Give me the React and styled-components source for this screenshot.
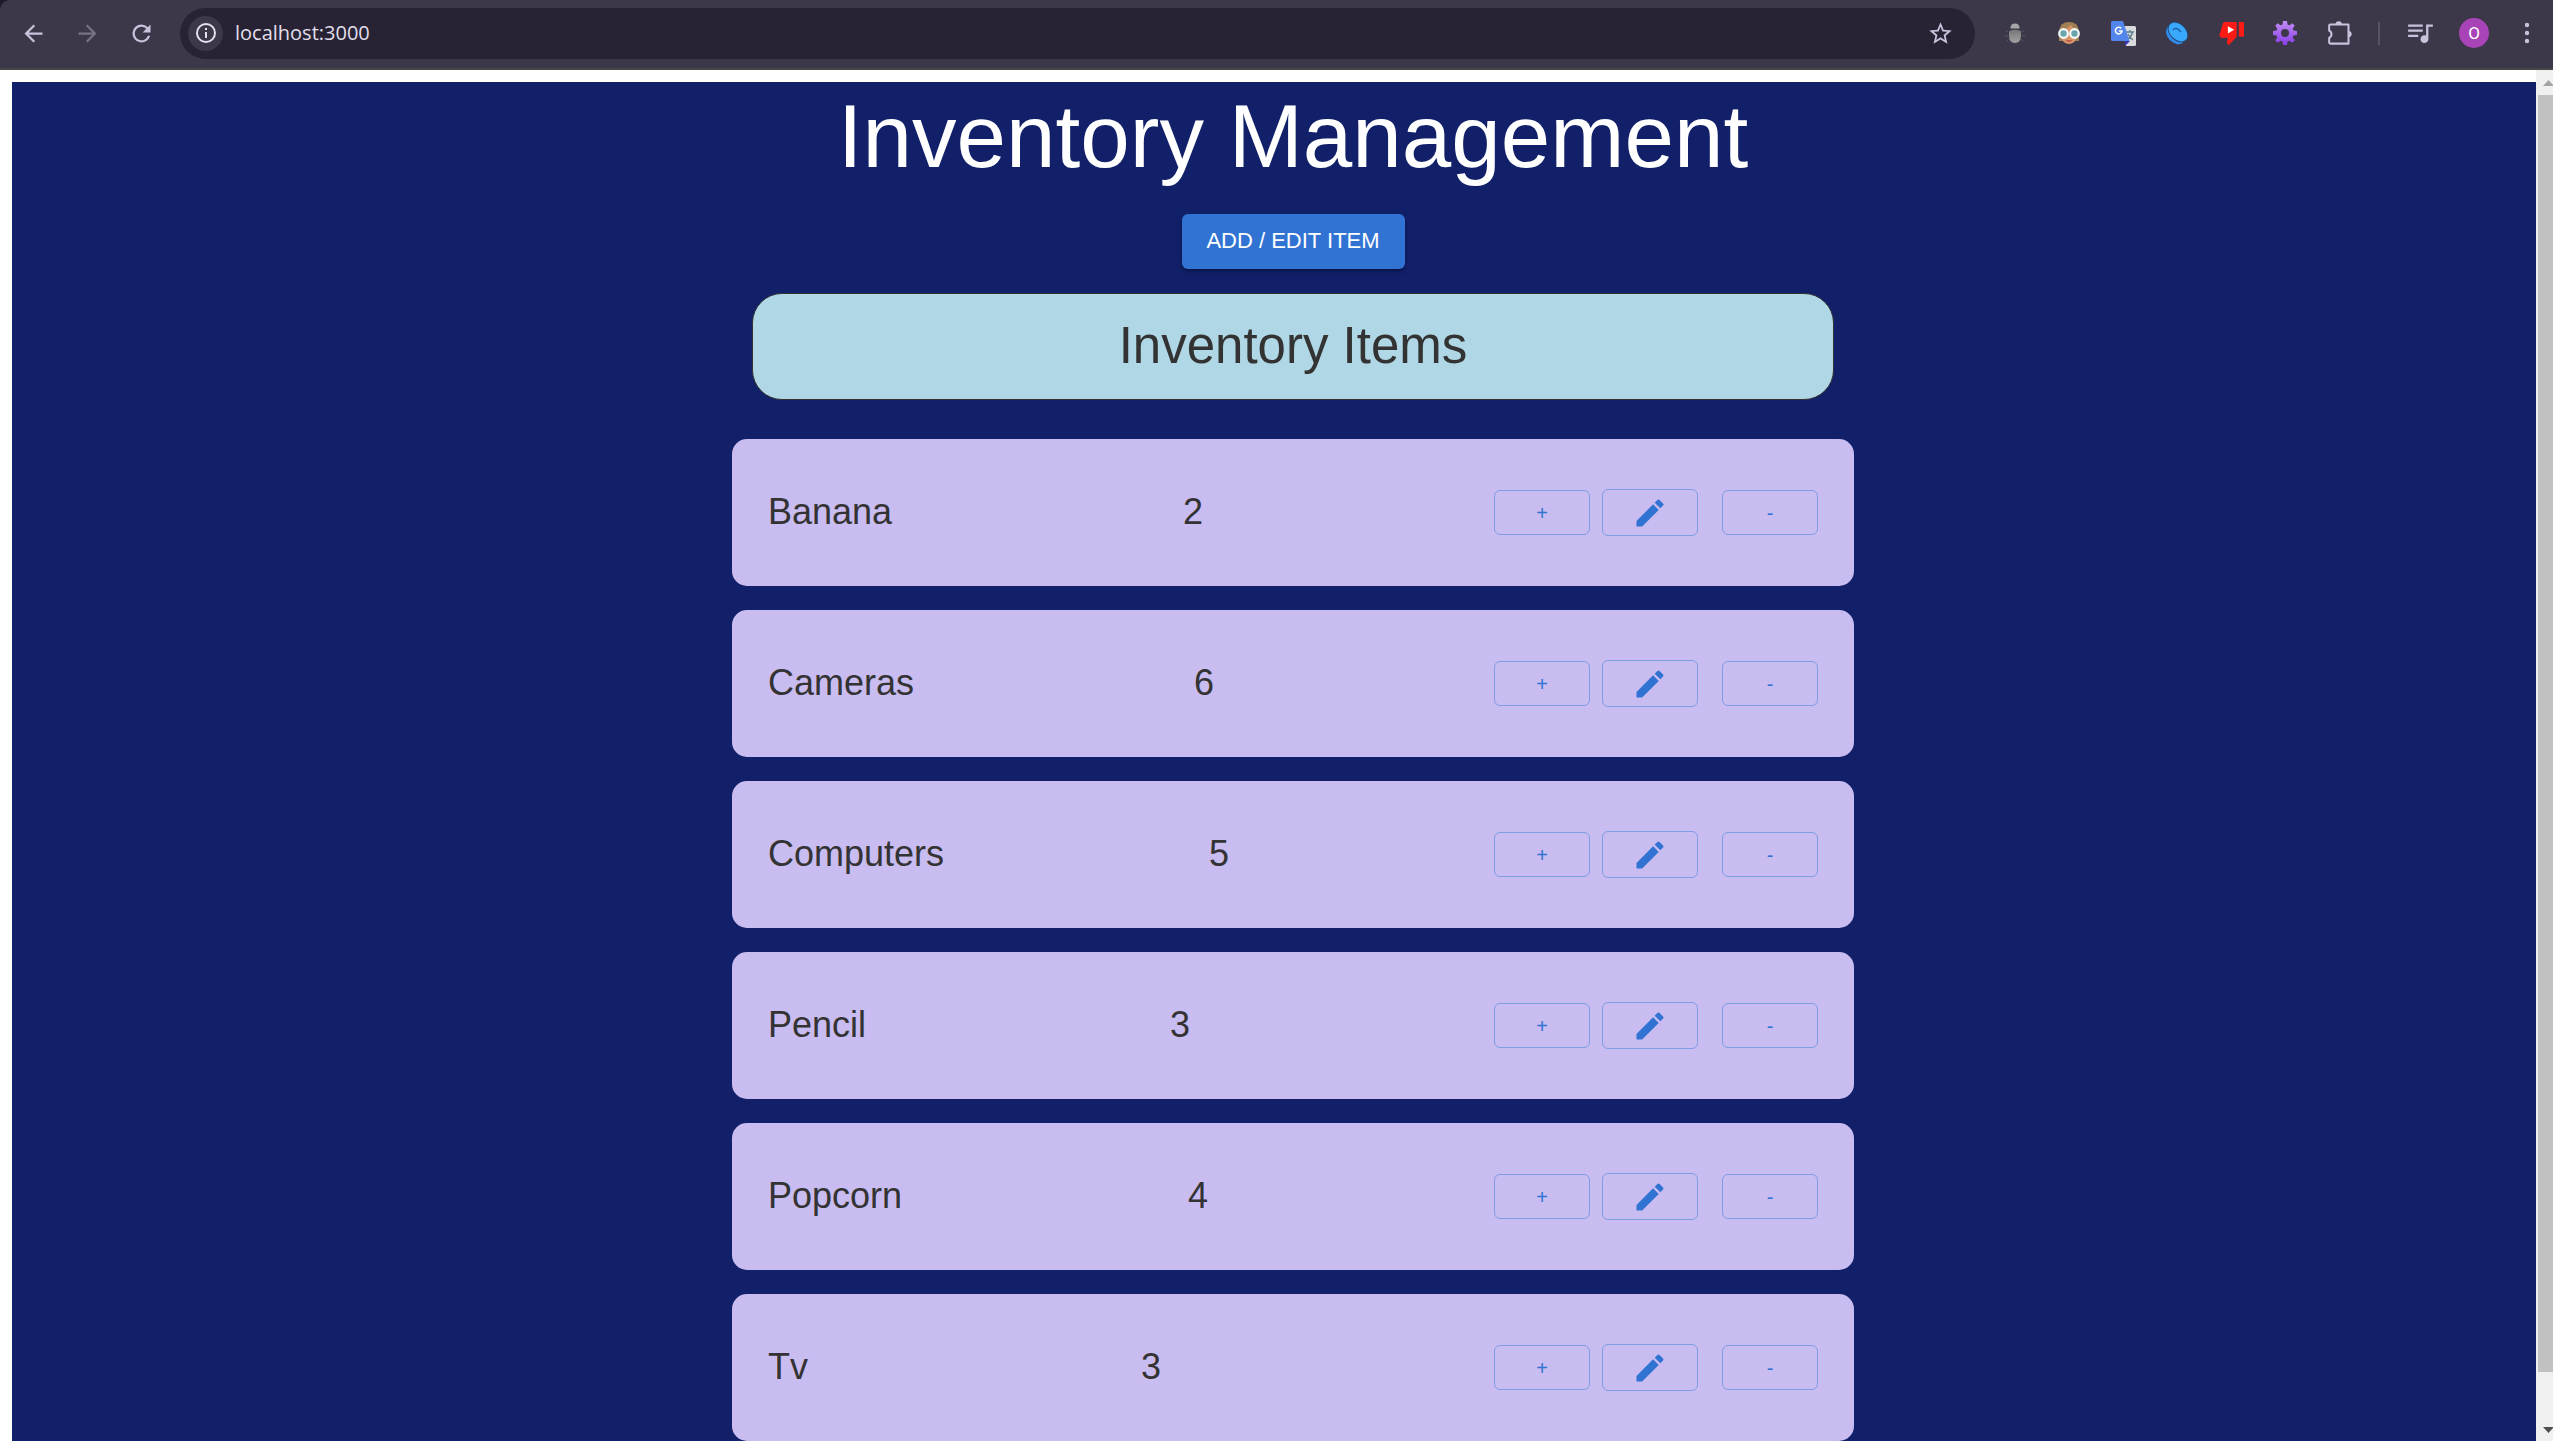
import React from 'react';
import styled, { createGlobalStyle } from 'styled-components';

const Global = createGlobalStyle`
  *, *::before, *::after { box-sizing: border-box; }
  body { margin: 0; background: #fff; font-family: "Liberation Sans", Arial, sans-serif; }
`;

const Window = styled.div`
  display: flex;
  flex-direction: column;
  height: 100vh;
  overflow: hidden;
  background: #1f1b2c;
`;

const Toolbar = styled.header`
  display: flex;
  align-items: center;
  flex: none;
  height: 70px;
  padding: 0 0 2px 17px;
  background: #3c384a;
  border-bottom: 2px solid #474649;
  border-top-left-radius: 10px;
`;

const ToolButton = styled.button`
  display: flex;
  align-items: center;
  justify-content: center;
  flex: none;
  width: ${(p) => p.$width || 54}px;
  height: 40px;
  padding: 0;
  border: 0;
  background: none;
  color: ${(p) => (p.$muted ? '#777286' : '#c9c2dc')};
  svg { display: block; flex: none; }
`;

const NavGroup = styled.nav`
  display: flex;
  flex: none;
  margin-left: -11px;
`;

const AddressBar = styled.div`
  display: flex;
  align-items: center;
  flex: 1;
  height: 51px;
  margin: 0 13px 0 12px;
  padding: 0 8px;
  border-radius: 26px;
  background: #272335;
`;

const SiteInfo = styled.button`
  display: flex;
  align-items: center;
  justify-content: center;
  width: 35px;
  height: 35px;
  padding: 0;
  border: 0;
  border-radius: 50%;
  background: #3c384a;
  color: #e4e0ee;
`;

const Address = styled.input`
  flex: 1;
  min-width: 0;
  padding: 0;
  margin-left: 12px;
  border: 0;
  outline: 0;
  background: none;
  color: #e2dfea;
  font: 20px/28px "Open Sans", "Noto Sans", sans-serif;
`;

const Divider = styled.span`
  width: 2px;
  height: 23px;
  margin: 0 13px 0 12px;
  background: #57536a;
`;

const Avatar = styled.span`
  display: flex;
  align-items: center;
  justify-content: center;
  width: 30px;
  height: 30px;
  border-radius: 50%;
  background: #a943b8;
  color: #fff;
  font: 17px/30px Roboto, sans-serif;
`;

const Viewport = styled.div`
  display: flex;
  flex: 1;
  min-height: 0;
  background: #fff;
`;

const Document = styled.main`
  flex: 1;
  min-width: 0;
  overflow: hidden;
  padding: 12px 0 0 12px;
`;

const Page = styled.div`
  display: flex;
  flex-direction: column;
  align-items: center;
  min-height: 100%;
  padding-left: 38px;
  background: #112069;
`;

const Title = styled.h1`
  margin: 0;
  color: #fff;
  font-size: 89px;
  font-weight: 400;
  line-height: 108px;
`;

const AddButton = styled.button`
  width: 223px;
  height: 55px;
  margin: 24px 0;
  padding: 0 0 2px;
  border: 0;
  border-radius: 6px;
  background: #3173d3;
  box-shadow: 0 4px 2px -3px rgba(0, 0, 0, 0.2), 0 3px 3px rgba(0, 0, 0, 0.14), 0 2px 8px rgba(0, 0, 0, 0.12);
  color: #fff;
  font: 22px/37px "Liberation Sans", Arial, sans-serif;
  text-transform: uppercase;
`;

const ListTitle = styled.h2`
  width: 1082px;
  margin: 0 0 39px;
  padding: 20px 0 22px;
  border: 1px solid #333;
  border-radius: 30px;
  background: #b0d7e5;
  color: #333;
  font-size: 51px;
  font-weight: 400;
  line-height: 63px;
  text-align: center;
`;

const List = styled.ul`
  display: flex;
  flex-direction: column;
  gap: 24px;
  width: 1122px;
  margin: 0;
  padding: 0;
  list-style: none;
`;

const Card = styled.li`
  display: flex;
  align-items: center;
  justify-content: space-between;
  height: 147px;
  padding: 0 36px;
  border-radius: 15px;
  background: #c9bcf0;
  color: #333;
`;

const CardText = styled.span`
  padding-bottom: 2px;
  font-size: 36px;
  line-height: 48px;
`;

const Actions = styled.div`
  display: flex;
  align-items: center;
  gap: 12px;
`;

const ActionButton = styled.button`
  display: flex;
  align-items: center;
  justify-content: center;
  width: 96px;
  height: ${(p) => (p.$tall ? 47 : 45)}px;
  margin-right: ${(p) => (p.$tall ? 12 : 0)}px;
  padding: 0;
  border: 1px solid #7f9de4;
  border-radius: 6px;
  background: none;
  color: #3173d3;
  font: 20px/34px "Liberation Sans", Arial, sans-serif;
`;

const Scrollbar = styled.div`
  display: flex;
  flex-direction: column;
  flex: none;
  width: 17px;
  padding-left: 2px;
  overflow: hidden;
  background: #f0f0f0;
  svg { display: block; flex: none; }
`;

const Thumb = styled.div`
  flex: 1;
  margin-bottom: 44px;
  background: #c1c1c1;
`;

const Icon = ({ size = 24, box = 24, children, ...rest }) => (
  <svg width={size} height={size} viewBox={`0 0 ${box} ${box}`} fill="currentColor" aria-hidden="true" {...rest}>
    {children}
  </svg>
);

const BackIcon = () => (
  <Icon size={27}><path d="M20 11H7.8l5.6-5.6L12 4l-8 8 8 8 1.4-1.4L7.8 13H20z" /></Icon>
);
const ForwardIcon = () => (
  <Icon size={27}><path d="M4 11h12.200l-5.600-5.600L12 4l8 8-8 8-1.400-1.400 5.600-5.600H4z" /></Icon>
);
const ReloadIcon = () => (
  <Icon size={27}><path d="M17.650 6.350A7.960 7.960 0 0 0 12 4a8 8 0 1 0 7.730 10h-2.080A6 6 0 1 1 12 6c1.660 0 3.140.690 4.220 1.780L13 11h7V4z" /></Icon>
);
const InfoIcon = () => (
  <Icon size={24}><path d="M11 7h2v2h-2zm0 4h2v6h-2zm1-9a10 10 0 1 0 0 20 10 10 0 0 0 0-20zm0 18a8 8 0 1 1 0-16 8 8 0 0 1 0 16z" /></Icon>
);
const StarIcon = () => (
  <Icon size={27}><path d="M22 9.240l-7.190-.620L12 2 9.190 8.630 2 9.240l5.460 4.730L5.820 21 12 17.270 18.180 21l-1.630-7.030zM12 15.400l-3.760 2.270 1-4.280-3.320-2.880 4.380-.380L12 6.100l1.710 4.040 4.380.380-3.320 2.880 1 4.280z" /></Icon>
);
const BugIcon = () => (
  <Icon size={22}>
    <defs>
      <linearGradient id="bug" x1="0" y1="0" x2="0" y2="1">
        <stop offset="0" stopColor="#777" /><stop offset="1" stopColor="#a2a2a2" />
      </linearGradient>
    </defs>
    <path d="M7 7q0-5.500 5-5.500T17 7z" fill="#a6a6a6" />
    <path d="M5.500 10q6.500-3 13 0v5q0 8-6.500 8t-6.500-8z" fill="url(#bug)" />
    <path d="M2 10h2M1 15h3M3 21l2-2M22 10h-2M23 15h-3M21 21l-2-2" stroke="#5f5d66" fill="none" />
  </Icon>
);
const FaceIcon = () => (
  <Icon size={24}>
    <path d="M2 20V10Q3 1 12 1t10 9v10z" fill="#a07f52" />
    <path d="M4 10Q10 8 14 4q2 4 6 5v7q-2 7-8 7t-8-7z" fill="#d59468" />
    <circle cx="6.500" cy="12.500" r="4.300" fill="#6ba6ac" stroke="#f4f8f8" strokeWidth="2.200" />
    <circle cx="17.500" cy="12.500" r="4.300" fill="#6ba6ac" stroke="#f4f8f8" strokeWidth="2.200" />
    <path d="M9.500 19.500q2.500 1 5 0" stroke="#bc4b42" fill="none" strokeWidth="1.300" />
  </Icon>
);
const TranslateIcon = () => (
  <Icon size={25} box={25}>
    <path d="M10 5h13.500q1.500 0 1.500 1.500v17q0 1.500-1.500 1.500H15z" fill="#d9dadd" />
    <path d="M15 11h8M19 9v2M21.500 11q-1 5-6 8M17 13q2 4 5 6" stroke="#5c7f8c" strokeWidth="1.400" fill="none" />
    <path d="M14 20h5l-5 5z" fill="#3a35b0" />
    <path d="M1.500 0H12l6.500 20h-17Q0 20 0 18.500v-17Q0 0 1.500 0z" fill="#5286ec" />
    <path d="M10.200 7.400A3.300 3.300 0 1 0 11 10H7.800" stroke="#fff" strokeWidth="1.600" fill="none" />
  </Icon>
);
const ShellIcon = () => (
  <Icon size={24}>
    <ellipse cx="10.500" cy="13.500" rx="8" ry="11" transform="rotate(-42 10.500 13.500)" fill="#2f8df0" />
    <ellipse cx="13" cy="11" rx="8" ry="11.500" transform="rotate(-45 13 11)" fill="#39a9fb" stroke="#26436f" strokeWidth="1" />
    <path d="M8 9q3-4 8 2" stroke="#1d5fa8" strokeWidth="1.500" fill="none" />
  </Icon>
);
const DislikeIcon = () => (
  <Icon size={25}>
    <path d="M5.500 1H17v14l-7.500 8q-3-1-1-7H2q-2-1-1.500-3l3-10Q4 1 5.500 1z" fill="#fd1c15" />
    <path d="M19 1h5v14h-5z" fill="#fd1c15" />
    <path d="M8.500 5v7l6-3.500z" fill="#fff" />
  </Icon>
);
const GearIcon = () => (
  <Icon size={24}>
    <defs>
      <linearGradient id="gear" x1="0" y1="0" x2="0" y2="1">
        <stop offset="0" stopColor="#c08cf5" /><stop offset="1" stopColor="#8a3ee8" />
      </linearGradient>
    </defs>
    <path fill="url(#gear)" fillRule="evenodd" d="M10 0h4l.500 3.500 2 .8L19.300 2.200 21.800 4.700 19.700 7.500l.8 2L24 10v4l-3.500.500-.8 2 2.100 2.800-2.500 2.500-2.800-2.100-2 .8L14 24h-4l-.500-3.500-2-.8-2.800 2.100-2.500-2.500 2.100-2.800-.8-2L0 14v-4l3.500-.500.8-2L2.200 4.700 4.700 2.200 7.500 4.300l2-.8zM12 8a4 4 0 1 0 0 8 4 4 0 0 0 0-8z" />
  </Icon>
);
const PuzzleIcon = () => (
  <Icon size={27}>
    <path d="M4 4H20V21H4Q2.800 21 2.800 19.800V16A3.600 3.600 0 0 0 2.800 9.500V5.200Q2.800 4 4 4z" fill="none" stroke="currentColor" strokeWidth="1.800" strokeLinejoin="round" />
    <path d="M8.500 4a2.800 2.800 0 0 1 5.600 0zM20 9.700a2.800 2.800 0 0 1 0 5.600z" />
  </Icon>
);
const QueueIcon = () => (
  <Icon size={27}>
    <path d="M1 4h13v2H1zM1 8.500h13v2H1zM1 13h9v2H1zM16 4h7v2h-4v11a3.500 3.500 0 1 1-2-3.200V4z" />
  </Icon>
);
const MoreIcon = () => (
  <Icon size={24}>
    <circle cx="12" cy="4" r="2.200" /><circle cx="12" cy="12" r="2.200" /><circle cx="12" cy="20" r="2.200" />
  </Icon>
);
const PencilIcon = () => (
  <Icon size={36}>
    <path d="M3 17.250V21h3.750L17.810 9.940l-3.750-3.750zM20.710 7.040a1 1 0 0 0 0-1.410l-2.340-2.340a1 1 0 0 0-1.410 0l-1.830 1.830 3.750 3.750z" />
  </Icon>
);

const extensions = [
  ['Inspector', BugIcon],
  ['Reader', FaceIcon],
  ['Translate', TranslateIcon],
  ['Shell', ShellIcon],
  ['Dislikes', DislikeIcon],
  ['Settings', GearIcon],
  ['Extensions', PuzzleIcon],
];

const items = [
  { name: 'Banana', quantity: 2 },
  { name: 'Cameras', quantity: 6 },
  { name: 'Computers', quantity: 5 },
  { name: 'Pencil', quantity: 3 },
  { name: 'Popcorn', quantity: 4 },
  { name: 'Tv', quantity: 3 },
];

const InventoryCard = ({ name, quantity }) => (
  <Card>
    <CardText>{name}</CardText>
    <CardText>{quantity}</CardText>
    <Actions>
      <ActionButton aria-label={`Add one ${name}`}>+</ActionButton>
      <ActionButton $tall aria-label={`Edit ${name}`}><PencilIcon /></ActionButton>
      <ActionButton aria-label={`Remove one ${name}`}>-</ActionButton>
    </Actions>
  </Card>
);

export default function App() {
  return (
    <Window>
      <Global />
      <Toolbar>
        <NavGroup>
          <ToolButton aria-label="Back"><BackIcon /></ToolButton>
          <ToolButton $muted aria-label="Forward"><ForwardIcon /></ToolButton>
          <ToolButton aria-label="Reload"><ReloadIcon /></ToolButton>
        </NavGroup>
        <AddressBar>
          <SiteInfo aria-label="Site information"><InfoIcon /></SiteInfo>
          <Address aria-label="Address" defaultValue="localhost:3000" />
          <ToolButton aria-label="Bookmark"><StarIcon /></ToolButton>
        </AddressBar>
        {extensions.map(([label, Glyph]) => (
          <ToolButton key={label} aria-label={label}><Glyph /></ToolButton>
        ))}
        <Divider />
        <ToolButton aria-label="Media queue"><QueueIcon /></ToolButton>
        <ToolButton aria-label="Profile"><Avatar>O</Avatar></ToolButton>
        <ToolButton $width={52} aria-label="Menu"><MoreIcon /></ToolButton>
      </Toolbar>
      <Viewport>
        <Document>
          <Page>
            <Title>Inventory Management</Title>
            <AddButton>Add / Edit Item</AddButton>
            <ListTitle>Inventory Items</ListTitle>
            <List>
              {items.map((item) => <InventoryCard key={item.name} {...item} />)}
            </List>
          </Page>
        </Document>
        <Scrollbar aria-hidden="true">
          <svg width="21" height="25" viewBox="0 0 21 25"><path d="M5 16l5.500-6 5.500 6z" fill="#a3a3a3" /></svg>
          <Thumb />
          <svg width="21" height="25" viewBox="0 0 21 25"><path d="M5 11l5.500 6 5.500-6z" fill="#505050" /></svg>
        </Scrollbar>
      </Viewport>
    </Window>
  );
}
